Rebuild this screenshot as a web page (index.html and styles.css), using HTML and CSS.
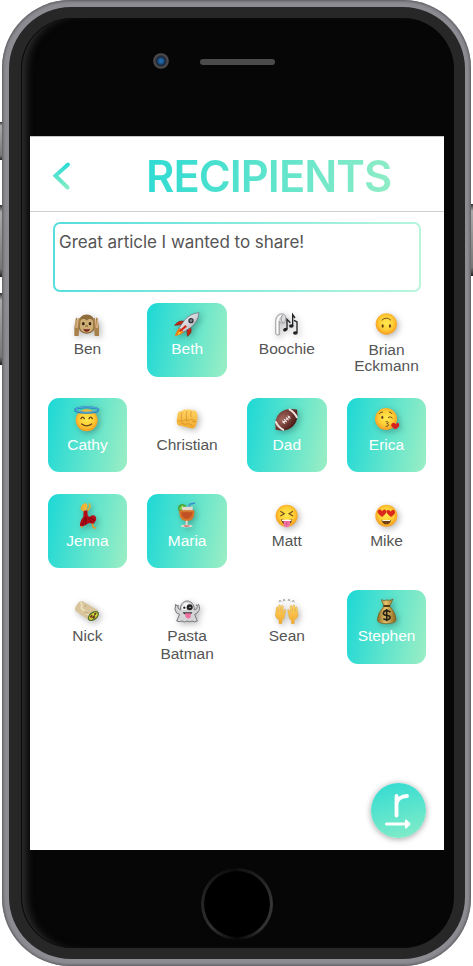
FILE: index.html
```html
<!DOCTYPE html>
<html lang="en">
<head>
<meta charset="utf-8">
<title>Recipients</title>
<link rel="stylesheet" href="styles.css">
</head>
<body>
<svg class="defs" width="0" height="0" aria-hidden="true">
  <defs>
    <radialGradient id="face" cx=".5" cy=".45" r=".55"><stop offset="0" stop-color="#ffe94f"/><stop offset=".6" stop-color="#ffce36"/><stop offset="1" stop-color="#f59a20"/></radialGradient>
    <linearGradient id="skin" x1="0" y1="0" x2="0" y2="1"><stop offset="0" stop-color="#ffd465"/><stop offset="1" stop-color="#f1a92c"/></linearGradient>
    <linearGradient id="mint" x1="0" y1="0" x2="0" y2="1"><stop offset="0" stop-color="#2ddbd5"/><stop offset="1" stop-color="#82ecc5"/></linearGradient>
    <linearGradient id="silver" x1="0" y1="0" x2="1" y2="1"><stop offset="0" stop-color="#fff"/><stop offset="1" stop-color="#a7a8b2"/></linearGradient>
    <linearGradient id="gold" x1="0" y1="0" x2="1" y2="0"><stop offset="0" stop-color="#8c6a24"/><stop offset=".45" stop-color="#e6c26a"/><stop offset="1" stop-color="#8a641d"/></linearGradient>
    <radialGradient id="leather" cx=".4" cy=".3" r=".7"><stop offset="0" stop-color="#a3665c"/><stop offset="1" stop-color="#4b1814"/></radialGradient>
  </defs>
</svg>
<div class="stage">
  <div class="side left"><i class="mute"></i><i class="volume"></i><i class="volume down"></i></div>
  <div class="phone"><div class="bezel"><div class="glass">
    <div class="sensors"><span class="camera"></span><span class="speaker"></span></div>
    <main class="screen">
      <header class="header">
        <svg class="back" width="20" height="30" viewBox="0 0 20 30"><path d="M16 3.500 3.500 14.800 15.500 26.500" fill="none" stroke="url(#mint)" stroke-width="4" stroke-linecap="round"/></svg>
        <h1 class="title">RECIPIENTS</h1>
      </header>
      <div class="message">Great article I wanted to share!</div>
      <section class="people">
        <div class="person">
          <svg class="emoji" viewBox="0 0 84 84"><circle cx="17" cy="41" r="10" fill="#97713b"/><circle cx="65" cy="41" r="10" fill="#97713b"/><path d="M16 37C17 2 65 2 66 37q3 30-25 31Q13 67 16 37" fill="#8f6d3c"/><path d="M22 39c-3-18 15-17 19-10 5-7 22-8 19 10 10 34-48 34-38 0" fill="#ceaf76"/><path d="M29 62q12 8 24 0-12 9-24 0" fill="#7d542d"/><ellipse cx="31" cy="38" rx="4" ry="5" fill="#32200f"/><ellipse cx="51" cy="38" rx="4" ry="5" fill="#32200f"/><path d="M37 46q4-3 8 0" stroke="#765028" stroke-width="3" fill="none"/><path d="M31 53q10 3 20 0-2 9-10 9t-10-9" fill="#7a201b"/><path d="M4 75V49l4-25q3-8 5-2v14l4-16 5 3-3 24-2 28zM78 75V49l-4-25q-3-8-5-2v14l-4-16-5 3 3 24 2 28z" fill="#a8814a"/><path d="M9 27v24m6-26-3 26m61-24v24m-6-26 3 26" stroke="#dfb88c" stroke-width="3"/></svg>
          <span class="name">Ben</span>
        </div>
        <div class="person selected">
          <svg class="emoji" viewBox="0 0 84 84"><path d="M35 31Q16 27 5 43l19-2zM52 47q8 18-9 29l-1-20z" fill="#c22a13" stroke="#861d10" stroke-width="2"/><path d="m20 49-8 10-7 17 19-6 11-8z" fill="#f07b13"/><path d="m20 57-6 15 14-11z" fill="#ffe238"/><path d="M78 5Q51 8 35 27L19 50l13 13 22-14Q75 32 78 5" fill="url(#silver)" stroke="#696a78" stroke-width="2"/><path d="m37 42-20 19 5 2 20-16z" fill="#d62813"/><circle cx="54" cy="29" r="8" fill="#34363e"/><circle cx="54" cy="29" r="4" fill="#7e828e"/></svg>
          <span class="name">Beth</span>
        </div>
        <div class="person">
          <svg class="emoji" viewBox="0 0 84 84"><path d="M8 69V29Q9 7 31 8q10 6 7 17-2 14-13 11l-6-5v40q-5 4-11-2" fill="#dcdcde" stroke="#858589" stroke-width="2"/><path d="M13 68V34q0-15 13-20" fill="none" stroke="#fff" stroke-width="4"/><path d="M29 12q-10 12 0 22" fill="none" stroke="#929297" stroke-width="3"/><g fill="#202225"><ellipse cx="37" cy="56" rx="7" ry="5" transform="rotate(-20 37 56)"/><ellipse cx="55" cy="45" rx="7" ry="5"/><ellipse cx="67" cy="66" rx="7" ry="5"/></g><path d="M42 55V25l10 10M59 44V11l7 10M72 65V33l-9-5" fill="none" stroke="#202225" stroke-width="4"/></svg>
          <span class="name">Boochie</span>
        </div>
        <div class="person two-line">
          <svg class="emoji" viewBox="0 0 84 84"><circle cx="40" cy="39" r="32" fill="url(#face)"/><path d="M27 27q13-12 26 0" fill="none" stroke="#79501c" stroke-width="3" stroke-linecap="round"/><ellipse cx="29" cy="45" rx="3.4" ry="5.5" fill="#66451d"/><ellipse cx="51" cy="45" rx="3.4" ry="5.5" fill="#66451d"/></svg>
          <span class="name">Brian<br>Eckmann</span>
        </div>

        <div class="person selected">
          <svg class="emoji" viewBox="0 0 84 84"><circle cx="41" cy="43" r="33" fill="url(#face)"/><ellipse cx="41" cy="12" rx="35" ry="8" fill="none" stroke="#207dbb" stroke-width="6"/><ellipse cx="41" cy="11" rx="35" ry="8" fill="none" stroke="#74c9ef" stroke-width="2"/><path d="M24 38q5-9 10 0m14 0q5-9 10 0M26 54q15 11 30 0" fill="none" stroke="#654419" stroke-width="4" stroke-linecap="round"/></svg>
          <span class="name">Cathy</span>
        </div>
        <div class="person">
          <svg class="emoji" viewBox="0 0 84 84"><path d="M14 22q5-9 13-7 6-7 15-4 7-4 13 2 16-3 18 12 2 18-3 29-4 17-17 13L24 59q-13 1-13-14z" fill="url(#skin)"/><path d="M27 19q-4 8-1 27m16-31q-5 11 0 32m13-31q-4 10 0 17m-42 9q13 9 24-1 10 6 17-1 9-1 15 8-6-5-12 0m-33 3q11 7 23 2l12 6" fill="none" stroke="#cf8b25" stroke-width="2"/></svg>
          <span class="name">Christian</span>
        </div>
        <div class="person selected">
          <svg class="emoji" viewBox="0 0 84 84"><g transform="rotate(-43 40 41)"><path d="M-4 41Q15 13 40 13t44 28Q65 69 40 69T-4 41" fill="url(#leather)"/><path d="M13 23q-7 18 0 36M67 23q7 18 0 36" fill="none" stroke="#eee4df" stroke-width="6"/><path d="M25 41h30M29 35v12m7-12v12m8-12v12m7-12v12" stroke="#f5eeeb" stroke-width="3"/></g></svg>
          <span class="name">Dad</span>
        </div>
        <div class="person selected">
          <svg class="emoji" viewBox="0 0 84 84"><circle cx="39" cy="39" r="33" fill="url(#face)"/><ellipse cx="28" cy="34" rx="3" ry="5" fill="#60401a"/><path d="M46 34q6-5 12 2M19 23q5-7 10-5m20 0q6 0 8 5M39 47c9-1 9 5 2 6 9 0 8 8-2 8" fill="none" stroke="#70501c" stroke-width="3" stroke-linecap="round"/><path d="M66 70Q47 58 59 51q7-2 9 4 5-8 10-2 4 10-12 17" fill="#da2122"/></svg>
          <span class="name">Erica</span>
        </div>

        <div class="person selected">
          <svg class="emoji" viewBox="0 0 84 84"><path d="m34 28-9-8 5-12M43 26l8-11-2-11" fill="none" stroke="#efac29" stroke-width="5" stroke-linejoin="round"/><path d="M28 18q0-14 9-14 8 1 6 12l-4 10-6-1z" fill="#f5b535"/><path d="m57 61 4 15 8 3M29 66l-4 11" fill="none" stroke="#e09a2c" stroke-width="5"/><path d="m32 27 11-2 1 15q4 6 8 4 4-6 14-3 5 5 3 14l-7 10-14-2-11 6-6 4-10-1q-1-15 10-28z" fill="#b50b17"/><path d="M38 44 28 70m12-24-2 23m8-20 11 11m-7-14 15 9" stroke="#710812" stroke-width="3"/></svg>
          <span class="name">Jenna</span>
        </div>
        <div class="person selected">
          <svg class="emoji" viewBox="0 0 84 84"><path d="M43 25 51 6l15-3" fill="none" stroke="#4086d0" stroke-width="4"/><circle cx="28" cy="19" r="13" fill="#44a637"/><path d="M18 22 28 8l8 16" fill="#90d44f"/><path d="M27 14h33l-2 12H28z" fill="#e4d9cf"/><path d="M19 25h45q3 28-18 32H37Q16 53 19 25" fill="#d77529"/><path d="M24 31h35q-2 17-18 20-15-3-17-20" fill="#c35126"/><path d="M41 56v14" stroke="#e8d6cd" stroke-width="6"/><ellipse cx="41" cy="72" rx="18" ry="4" fill="#eed9d2"/><ellipse cx="41" cy="72" rx="10" ry="2" fill="#d16665"/></svg>
          <span class="name">Maria</span>
        </div>
        <div class="person">
          <svg class="emoji" viewBox="0 0 84 84"><circle cx="41" cy="41" r="33" fill="url(#face)"/><path d="m22 28 12 7-12 7m38-14-12 7 12 7" fill="none" stroke="#72501a" stroke-width="3.5"/><path d="M24 52q17 5 34 0-4 17-17 17T24 52" fill="#70401b"/><path d="M27 53h28v4H27" fill="#fff"/><path d="M32 57h19v12q-4 8-10 7-8 0-9-8z" fill="#f071a5"/><path d="M41 59v10" stroke="#ca437f" stroke-width="2"/></svg>
          <span class="name">Matt</span>
        </div>
        <div class="person">
          <svg class="emoji" viewBox="0 0 84 84"><circle cx="40" cy="41" r="33" fill="url(#face)"/><path d="M27 45Q8 31 16 24q8-4 11 4 6-9 12-3 5 8-12 20" fill="#dc271c"/><path d="M54 45Q35 31 42 25q8-4 11 4 6-9 12-3 5 8-11 19" fill="#dc271c"/><path d="M25 53q15 4 30 0-4 14-15 14T25 53" fill="#704017"/><path d="M28 54h24v3H28" fill="#fff3df"/></svg>
          <span class="name">Mike</span>
        </div>

        <div class="person">
          <svg class="emoji" viewBox="0 0 84 84"><path d="M9 25Q16 9 28 9l46 27q7 19-8 31l-14 3L8 40q-5-7 1-15" fill="#d8c59c"/><path d="M22 12q7 3 3 18l27 25" fill="none" stroke="#eee0bd" stroke-width="5"/><ellipse cx="61" cy="54" rx="19" ry="12" transform="rotate(-38 61 54)" fill="#4e702b"/><ellipse cx="61" cy="54" rx="15" ry="8" transform="rotate(-38 61 54)" fill="#dcd33b"/><path d="m52 58 6-6m2 9 5-6m-1-6 5-3" stroke="#7c261d" stroke-width="5"/><path d="m57 61 12-15" stroke="#2f5421" stroke-width="3"/><path d="M37 22v4m-3 15 12 5" stroke="#99774b" stroke-width="2"/></svg>
          <span class="name">Nick</span>
        </div>
        <div class="person">
          <svg class="emoji" viewBox="0 0 84 84"><path d="M22 36C21 0 64 0 64 36q9-1 9-10l-4-5 5 1q4-8 4 2 4 6 0 13-5 10-13 12l8 20q-9 5-16 0-7 5-15 0-8 6-15 0-8 4-16 0l9-20Q8 47 6 34l2-15 4 5 4-2-1 8z" fill="#d5d5d8" stroke="#77777c" stroke-width="3"/><path d="M30 18q10-8 20 0l-8 13z" fill="#f5f5f6"/><circle cx="34" cy="29" r="7" fill="#fff"/><circle cx="34" cy="29" r="3.5" fill="#222"/><circle cx="50" cy="28" r="9" fill="#222"/><circle cx="51" cy="28" r="2" fill="#fff"/><path d="M29 43h29q-3 8-14 8t-15-8" fill="#39353a"/><path d="M36 46h17v11q-7 9-15 0z" fill="#ef6f9f"/></svg>
          <span class="name">Pasta<br>Batman</span>
        </div>
        <div class="person">
          <svg class="emoji" viewBox="0 0 84 84"><path id="hand" d="M18 77V66Q6 59 7 51l3-23q4-5 5 2v11l2-19q4-5 6 2v16l3-17q4-4 5 3l-1 18 4-9q5-3 4 4l-5 22-6 7v9z" fill="url(#skin)" stroke="#d99e35"/><use href="#hand" transform="matrix(-1 0 0 1 82 0)"/><path d="m18 13 3-7 4 6M31 10l2-7 3 6M45 9l3-6 3 7M57 12l4-6 3 7" fill="none" stroke="#a7a7a9" stroke-width="3"/></svg>
          <span class="name">Sean</span>
        </div>
        <div class="person selected">
          <svg class="emoji" viewBox="0 0 84 84"><path d="M25 5q9 5 17 1 9 4 18-3L50 25q19 20 19 42-3 10-29 10T13 66q1-22 20-41z" fill="url(#gold)" stroke="#76571b" stroke-width="2"/><path d="M31 24h20" stroke="#523b14" stroke-width="6"/><path d="M52 42q-11-8-19-1-6 10 8 11t9 10q-8 7-19 0M41 33v37" fill="none" stroke="#262115" stroke-width="5"/></svg>
          <span class="name">Stephen</span>
        </div>
      </section>
      <footer class="actions">
        <button class="send" aria-label="Send"><svg width="55" height="55" viewBox="0 0 55 55" fill="none" stroke="#fff" stroke-width="3.800" stroke-linecap="round" stroke-linejoin="round"><path d="M25.500 13v19.500M25.500 21.500c.5-5.500 5-8.500 10.500-8.500"/><path d="M15.500 41H36" stroke-width="3"/><path d="m35 37.500 3.500 3.500-3.500 3.500z" fill="#fff" stroke-width="2"/></svg></button>
      </footer>
    </main>
    <div class="home-area"><div class="home"></div></div>
  </div></div></div>
  <div class="side right"><i class="volume"></i></div>
</div>
</body>
</html>
```
FILE: styles.css
```css
* { box-sizing: border-box; }
body { margin: 0; background: #fff; font-family: "Liberation Sans", sans-serif; overflow: hidden; }
.defs { display: block; }
.stage { display: flex; width: 473px; height: 966px; }
.side { width: 2px; height: 966px; }
.side.left { padding-top: 122px; }
.side.right { padding-top: 204px; }
.side i { display: block; background: linear-gradient(#333, #aaa 10%, #777 88%, #222); }
.mute { height: 38px; margin-bottom: 45px; }
.volume { height: 72px; }
.down { margin-top: 16px; }
.phone {
  width: 469px; height: 966px; padding: 7px 6px 7px 7px; border-radius: 68px; background: #8c8c92;
  box-shadow: inset 0 0 3px 1px #55555a;
}
.bezel { height: 952px; padding: 11px 11px 11px 12px; border-radius: 62px; background: #272727; }
.glass {
  height: 930px; padding-left: 9px; border-radius: 51px; background: #060606;
  box-shadow: inset 1px 0 0 #080808, inset 10px 0 9px -5px #303030;
}
.sensors { display: flex; align-items: center; gap: 31px; height: 118px; padding: 0 0 32px 123px; }
.camera { width: 16px; height: 16px; border-radius: 50%; background: radial-gradient(circle at 50% 50%, #2469a5 0 1px, #174c80 3px, #122a48 4px, #303034 5px, #505055 7px, #29292b 8px); }
.speaker { width: 75px; height: 6px; border-radius: 3px; background: #4b4b4b; }
.sensors .speaker { position: relative; top: .5px; }
.screen { display: flex; flex-direction: column; width: 414px; height: 714px; background: #fff; border-top: 1px solid #c9c6c6; }
.header { display: flex; height: 75px; border-bottom: 1px solid #cfd1d1; padding: 24px 0 0 22px; }
.back { display: block; }
.title {
  width: 250px; height: 50px; margin: -10px 0 0 74px;
  font: 600 43.500px/50px Inter, sans-serif; letter-spacing: -1px; white-space: nowrap;
  color: transparent; background: linear-gradient(100deg, #2ddbd3, #91edc5); background-clip: text; -webkit-background-clip: text;
}
.message {
  width: 368px; height: 70px; margin: 10px 0 0 23px; padding: 8px 4px; border: 2px solid transparent; border-radius: 7px;
  color: #555; font: 17px/21px Inter, sans-serif; letter-spacing: -.04px;
  background: linear-gradient(#fff, #fff) padding-box, linear-gradient(100deg, #55dedd, #b9f6dc) border-box;
}
.people { display: grid; grid-template-columns: repeat(4, 79.500px); grid-auto-rows: 74px; gap: 21.800px 20.200px; padding: 10.500px 0 0 17.700px; }
.person { display: flex; flex-direction: column; align-items: center; padding-top: 8px; border-radius: 11px; color: #555; }
.selected { color: #fff; background: linear-gradient(100deg, #20d9d5 3%, #94edc5 94%); }
.emoji { display: block; width: 28px; height: 28px; flex: none; overflow: visible; filter: drop-shadow(2px 2px 3px rgba(0, 0, 0, .28)); }
.name { font-size: 15.500px; line-height: 17.500px; margin-top: 1.500px; text-align: center; white-space: nowrap; }
.two-line .name { margin-top: 3px; line-height: 16.500px; }
.actions { display: flex; justify-content: flex-end; margin-top: auto; padding: 0 18px 12px 0; }
.send { width: 55px; height: 55px; padding: 0; border: 0; border-radius: 50%; background: linear-gradient(165deg, #30dbd3, #86edc7); box-shadow: 0 1px 6px rgba(0, 0, 0, .38); }
.send svg { display: block; }
.home-area { display: flex; justify-content: center; width: 414px; padding-top: 18px; }
.home {
  width: 72px; height: 72px; border: 3px solid transparent; border-radius: 50%;
  background: linear-gradient(#000, #000) padding-box, conic-gradient(#101010, #363636 25%, #303030 38%, #070707 50%, #303030 63%, #222 80%, #0a0a0a) border-box;
}
```
